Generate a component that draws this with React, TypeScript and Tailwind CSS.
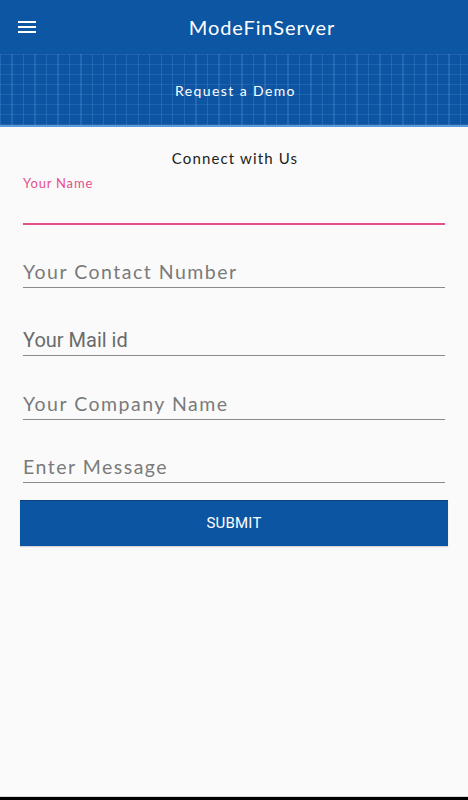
const fields = [
  { label: 'Your Contact Number', roboto: false, h: 'h-[63px]' },
  { label: 'Your Mail id', roboto: true, h: 'h-[68px]' },
  { label: 'Your Company Name', roboto: false, h: 'h-[64px]' },
  { label: 'Enter Message', roboto: false, h: 'h-[63px]' },
];

function App() {
  return (
    <div className="w-[468px] h-[800px] flex flex-col bg-[#fafafa] font-['Lato','Noto_Sans',sans-serif] overflow-hidden">
      {/* toolbar */}
      <div className="h-[54px] flex items-center bg-[#0c56a4] shrink-0">
        <div className="w-[54px] flex flex-col gap-[3px] pl-[18px]">
          <span className="block w-[18px] h-[2px] bg-white"></span>
          <span className="block w-[18px] h-[2px] bg-white"></span>
          <span className="block w-[18px] h-[2px] bg-white"></span>
        </div>
        <div className="flex-1 text-center text-white text-[20px] tracking-[0.9px] pl-[2px]">ModeFinServer</div>
      </div>

      {/* banner */}
      <div className="h-[73px] shrink-0 flex items-center justify-center bg-[#0d55a2] bg-[repeating-linear-gradient(90deg,rgba(120,170,230,0.22)_0px,rgba(120,170,230,0.22)_1px,transparent_1px,transparent_11.5px),repeating-linear-gradient(0deg,rgba(120,170,230,0.16)_0px,rgba(120,170,230,0.16)_1px,transparent_1px,transparent_10px)] border-b-[2px] border-[#5d9ad6]">
        <span className="text-white text-[14px] tracking-[1.4px] pt-[1px] pl-[3px]">Request a Demo</span>
      </div>

      {/* form */}
      <div className="flex flex-col flex-1">
        <div className="text-center text-[#222] text-[15px] tracking-[1.15px] mt-[22px] leading-[18px] pl-[2px]">Connect with Us</div>

        <div className="mx-[23px] mt-[9px]">
          <div className="text-[#e3508a] text-[13px] tracking-[0.8px] leading-[14px]">Your Name</div>
          <div className="h-[35px] border-b-2 border-[#e3508a]"></div>
        </div>

        {fields.map((f, i) => (
          <div key={i} className={`mx-[23px] ${f.h} flex items-end border-b-[1.5px] border-[#8a8a8a]`}>
            <div
              className={
                f.roboto
                  ? "text-[#6a6a6a] text-[20px] leading-[24px] font-['Roboto',sans-serif] pb-[3px]"
                  : "text-[#7a7a7a] text-[19.5px] leading-[24px] tracking-[1.5px] pb-[3px]"
              }
            >
              {f.label}
            </div>
          </div>
        ))}

        <button className="mx-[20px] mt-[17px] h-[46px] bg-[#0b55a2] border-t border-[#093f7c] text-white text-[15px] font-['Roboto',sans-serif] tracking-[0.2px] shadow-[0_1px_1px_rgba(0,0,0,0.15)]">
          SUBMIT
        </button>
      </div>

      <div className="h-[1px] bg-[#d8d8d8] shrink-0"></div>
      <div className="h-[3px] bg-black shrink-0"></div>
    </div>
  );
}

export default App;
